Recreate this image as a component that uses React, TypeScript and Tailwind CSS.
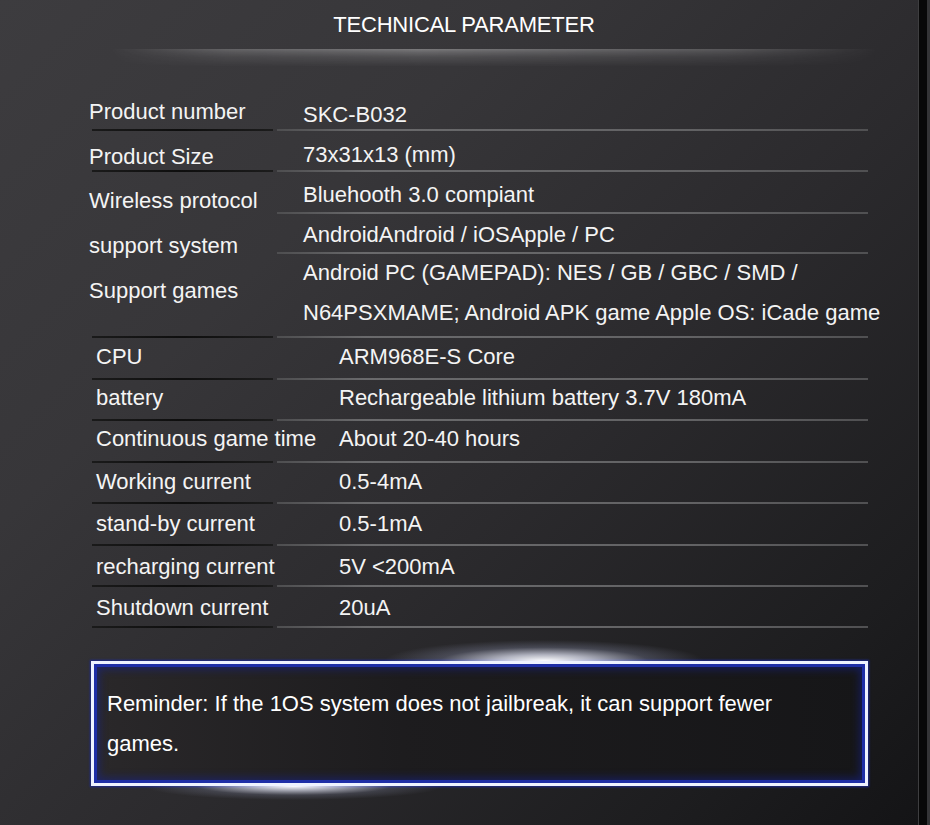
import React from "react";

type Row = {
  label: string;
  value: string[];
  h: string;
  lp: string;
  vp: string;
};

const section1: Row[] = [
  { label: "Product number", value: ["SKC-B032"], h: "h-[42px]", lp: "pt-[10px]", vp: "pt-[13px]" },
  { label: "Product Size", value: ["73x31x13 (mm)"], h: "h-[41px]", lp: "pt-[13px]", vp: "pt-[11px]" },
  { label: "Wireless protocol", value: ["Bluehooth 3.0 compiant"], h: "h-[42px]", lp: "pt-[16px]", vp: "pt-[10px]" },
  { label: "support system", value: ["AndroidAndroid / iOSApple / PC"], h: "h-[40px]", lp: "pt-[19px]", vp: "pt-[8px]" },
  {
    label: "Support games",
    value: [
      "Android PC (GAMEPAD): NES / GB / GBC / SMD /",
      "N64PSXMAME; Android APK game Apple OS: iCade game",
    ],
    h: "h-[84px]",
    lp: "pt-[24px]",
    vp: "pt-[6px]",
  },
];

const section2: Row[] = [
  { label: "CPU", value: ["ARM968E-S Core"], h: "h-[42px]", lp: "pt-[6px]", vp: "pt-[6px]" },
  { label: "battery", value: ["Rechargeable lithium battery 3.7V 180mA"], h: "h-[41px]", lp: "pt-[5px]", vp: "pt-[5px]" },
  { label: "Continuous game time", value: ["About 20-40 hours"], h: "h-[42px]", lp: "pt-[5px]", vp: "pt-[5px]" },
  { label: "Working current", value: ["0.5-4mA"], h: "h-[41px]", lp: "pt-[6px]", vp: "pt-[6px]" },
  { label: "stand-by current", value: ["0.5-1mA"], h: "h-[42px]", lp: "pt-[7px]", vp: "pt-[7px]" },
  { label: "recharging current", value: ["5V <200mA"], h: "h-[41px]", lp: "pt-[8px]", vp: "pt-[8px]" },
  { label: "Shutdown current", value: ["20uA"], h: "h-[41px]", lp: "pt-[8px]", vp: "pt-[8px]" },
];

function TableRow({ row, second }: { row: Row; second: boolean }) {
  return (
    <div className={`flex gap-[4px] ${row.h}`}>
      <div className="flex w-[181px] flex-col">
        <div
          className={`${row.lp} ${second ? "pl-[4px]" : "-ml-[3px]"} whitespace-nowrap text-[22px] leading-[26px] text-[#f4f4f4]`}
        >
          {row.label}
        </div>
        <div className="mt-auto h-[2px] bg-[linear-gradient(90deg,#1a1a1a,#0e0e0e_50%,#1c1c1c)]" />
      </div>
      <div className="flex w-[591px] flex-col">
        <div
          className={`${row.vp} ${second ? "pl-[62px]" : "pl-[26px]"} flex flex-col gap-[14px] whitespace-nowrap text-[22px] leading-[26px] text-[#f4f4f4]`}
        >
          {row.value.map((v) => (
            <div key={v}>{v}</div>
          ))}
        </div>
        <div className="mt-auto h-[2px] bg-[linear-gradient(90deg,#4e4e50,#6a6a6c_15%,#626264_70%,#505052)]" />
      </div>
    </div>
  );
}

export default function App() {
  return (
    <div className="flex h-[825px] w-[930px] overflow-hidden font-['Liberation_Sans',Arial,sans-serif]">
      <div className="relative flex w-[918px] flex-col bg-[linear-gradient(135deg,#3d3c3f_0%,#373639_30%,#2b2a2d_58%,#1d1d1f_85%,#141416_100%)]">
        <div className="pl-[10px] pt-[12px] text-center text-[22px] leading-[26px] tracking-[-0.2px] text-white">
          TECHNICAL PARAMETER
        </div>
        <div className="ml-[110px] mt-[11px] h-[18px] w-[770px] bg-[image:linear-gradient(90deg,rgba(255,255,255,0)_0%,rgba(255,255,255,0.22)_15%,rgba(255,255,255,0.34)_40%,rgba(255,255,255,0.2)_80%,rgba(255,255,255,0)_100%)] [mask-image:linear-gradient(180deg,#000_0px,rgba(0,0,0,0.7)_3px,rgba(0,0,0,0.35)_8px,transparent_100%)]" />

        <div className="mt-[22px] pl-[92px]">
          {section1.map((r) => (
            <TableRow key={r.label} row={r} second={false} />
          ))}
          {section2.map((r) => (
            <TableRow key={r.label} row={r} second={true} />
          ))}
        </div>

        <div className="relative ml-[91px] mt-[33px] h-[125px] w-[777px] border-[3px] border-[#eef2ff] bg-[linear-gradient(90deg,#2a282a,#1d1c1e_40%,#161618)] pl-[13px] pt-[20px] text-[22px] leading-[40px] text-white shadow-[0_0_2px_1px_#1c2a90,inset_0_0_0_3px_#1e2ea6,inset_0_0_8px_5px_rgba(22,34,150,0.55)]">
          <div className="pointer-events-none absolute -top-[24px] left-[290px] h-[21px] w-[320px] bg-[radial-gradient(ellipse_50%_100%_at_50%_100%,rgba(255,255,255,1)_0%,rgba(235,238,255,0.7)_30%,rgba(200,210,255,0.2)_65%,transparent_100%)]" />
          <div className="pointer-events-none absolute -bottom-[17px] left-[50px] h-[14px] w-[300px] bg-[radial-gradient(ellipse_50%_100%_at_50%_0%,rgba(255,255,255,1)_0%,rgba(235,238,255,0.65)_30%,rgba(200,210,255,0.15)_65%,transparent_100%)]" />
          <div className="whitespace-nowrap">
            Reminder: If the 1OS system does not jailbreak, it can support fewer
            <br />
            games.
          </div>
        </div>
      </div>
      <div className="w-[1px] bg-[#3e3e40]" />
      <div className="w-[8px] bg-[#080808]" />
      <div className="w-[3px] bg-[#343436]" />
    </div>
  );
}
